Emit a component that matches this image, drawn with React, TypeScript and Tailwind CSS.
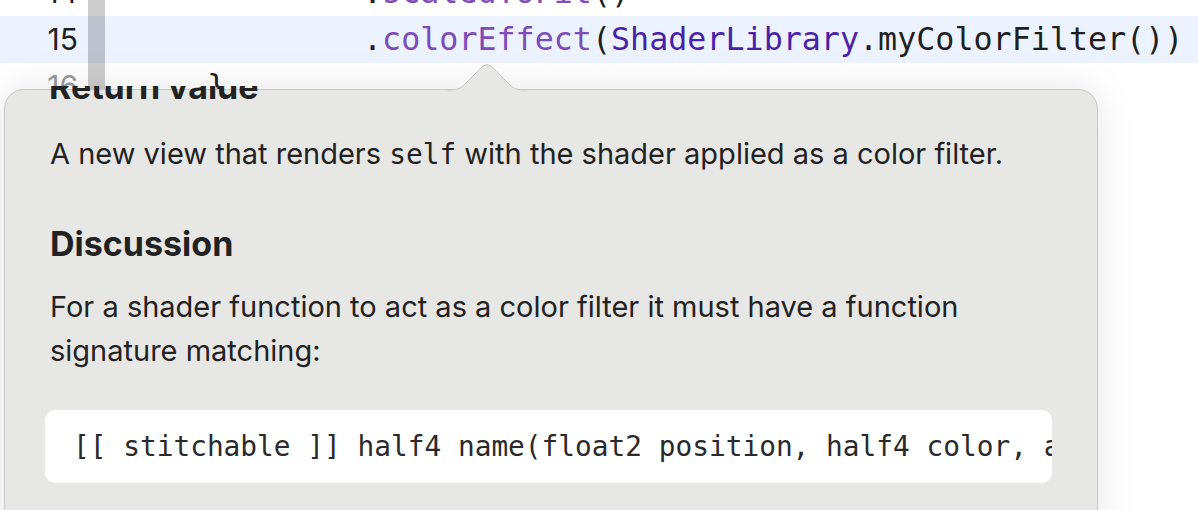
import React from "react";

export default function App() {
  const mono = { fontFamily: '"DejaVu Sans Mono", "Liberation Mono", monospace' };
  const sans = { fontFamily: 'Inter, "Noto Sans", "Liberation Sans", sans-serif' };
  return (
    <div className="relative w-[1198px] h-[510px] overflow-hidden bg-white" style={sans}>
      {/* editor */}
      <div className="relative -mt-[31px]">
        <div className="absolute left-[88px] top-0 w-[17px] h-[200px] bg-black/20 z-10" />
        {/* line 14 */}
        <div className="flex h-[47px] items-center">
          <div className="w-[80px] pr-[2px] text-right text-[30px] text-[#1f1f1f]">14</div>
          <div className="ml-[283px] text-[31.7px] whitespace-pre" style={mono}>
            <span className="text-[#1f1f1f]">.</span>
            <span className="text-[#7d4cb8]">scaledToFit</span>
            <span className="text-[#1f1f1f]">()</span>
          </div>
        </div>
        {/* line 15 */}
        <div className="flex h-[47px] items-center bg-[#ecf3fe]">
          <div className="w-[80px] pr-[2px] text-right text-[30px] text-[#1f1f1f]">15</div>
          <div className="ml-[283px] text-[31.7px] whitespace-pre" style={mono}>
            <span className="text-[#1f1f1f]">.</span>
            <span className="text-[#7d4cb8]">colorEffect</span>
            <span className="text-[#1f1f1f]">(</span>
            <span className="text-[#4a22a8]">ShaderLibrary</span>
            <span className="text-[#1f1f1f]">.myColorFilter())</span>
          </div>
        </div>
        {/* line 16 */}
        <div className="flex h-[47px] items-center">
          <div className="w-[80px] pr-[2px] text-right text-[30px] text-[#9a9a9a]">16</div>
          <div className="ml-[127px] text-[31.7px] text-[#1f1f1f]" style={mono}>{"}"}</div>
        </div>
      </div>

      {/* popover */}
      <div className="absolute left-[4px] top-[89px] w-[1094px] h-[460px] z-20 rounded-[20px] border border-[#c8c8c8] bg-[#e7e7e5] shadow-[0_0_40px_rgba(0,0,0,0.10)]">
        <div className="pl-[45px] pt-[42px] text-[#222222]">
          <p className="text-[29px] leading-[44px]">
            A new view that renders <span className="text-[27.8px]" style={mono}>self</span> with the shader applied as a color filter.
          </p>
          <h2 className="mt-[47px] text-[34px] leading-[40px] font-bold">Discussion</h2>
          <p className="mt-[21px] w-[960px] text-[29px] leading-[44px]">
            For a shader function to act as a color filter it must have a function signature matching:
          </p>
          <div className="mt-[37px] -ml-[5px] w-[1007px] h-[73px] rounded-[10px] bg-white flex items-center pl-[28px] overflow-hidden">
            <span className="text-[27.8px] text-[#2a2a2a] whitespace-pre" style={mono}>
              [[ stitchable ]] half4 name(float2 position, half4 color, args...)
            </span>
          </div>
        </div>
      </div>

      {/* arrow */}
      <svg className="absolute left-[447px] top-[64px] z-30" width="80" height="27" viewBox="0 0 80 27">
        <path d="M0 26 C10 26 14 25 20 18 L36 2 Q40 -1 44 2 L60 18 C66 25 70 26 80 26 L80 27 L0 27 Z" fill="#e7e7e5" />
        <path d="M0 26 C10 26 14 25 20 18 L36 2 Q40 -1 44 2 L60 18 C66 25 70 26 80 26" fill="none" stroke="#c8c8c8" strokeWidth="1" />
      </svg>

      {/* overflowing heading, clipped */}
      <div className="absolute left-[49px] top-[86px] h-[15px] overflow-hidden z-30">
        <div className="-mt-[19px] text-[34px] leading-[40px] font-bold text-[#222222] whitespace-pre">Return value</div>
      </div>
    </div>
  );
}
